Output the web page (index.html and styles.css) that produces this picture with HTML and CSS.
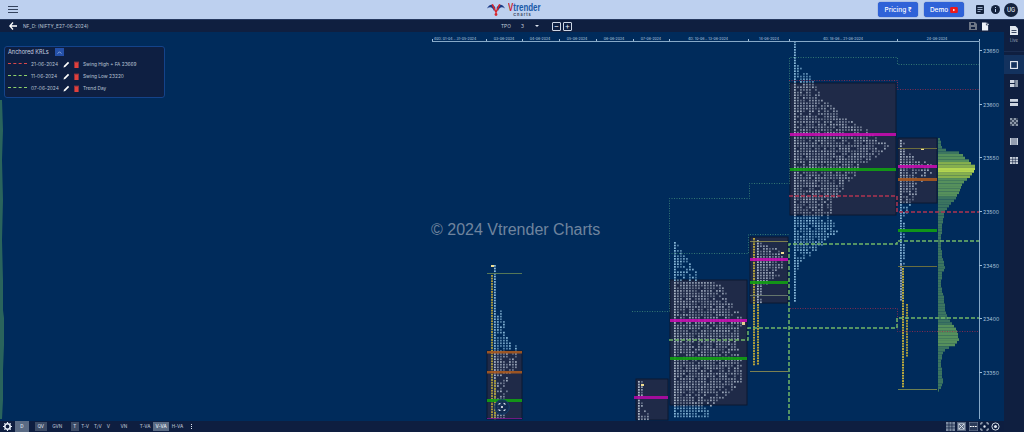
FILE: index.html
```html
<!DOCTYPE html>
<html lang="en">
<head>
<meta charset="utf-8">
<title>Vtrender Charts</title>
<link rel="stylesheet" href="styles.css">
</head>
<body>
<header class="topbar">
  <button class="menu" aria-label="Menu"><span></span><span></span><span></span></button>
  <div class="logo">
    <svg class="logo-mark" viewBox="0 0 18 13" width="18" height="13">
      <path d="M0 5.500 C2 1 6 0 8.500 5 L7 8 C5.500 4 3 3.500 0 5.500Z" fill="#1b3a86"/>
      <path d="M18 5.500 C16 1 12 0 9.500 5 L11 8 C12.500 4 15 3.500 18 5.500Z" fill="#1b3a86"/>
      <path d="M6 1 L9 7.500 L12 1 L13.500 1.500 L9 11 L4.500 1.500Z" fill="#d8262c"/>
      <circle cx="9" cy="11.500" r="1.400" fill="#d8262c"/>
    </svg>
    <div class="logo-text"><span class="logo-name"><b>V</b>trender</span><span class="logo-sub">Charts</span></div>
  </div>
  <div class="top-actions">
    <button class="cta">Pricing ₹</button>
    <button class="cta">Demo
      <svg viewBox="0 0 9 7" width="8" height="6"><rect width="9" height="7" rx="1.500" fill="#f01818"/><path d="M3.500 2 L6 3.500 L3.500 5Z" fill="#fff"/></svg>
    </button>
    <svg class="top-icon" viewBox="0 0 8 9" width="8" height="9"><rect width="8" height="9" rx="1" fill="#14233f"/><path d="M1.500 2.500h5M1.500 4.500h5M1.500 6.500h3" stroke="#bdd0ef" stroke-width=".8"/></svg>
    <svg class="top-icon" viewBox="0 0 9 9" width="9" height="9"><circle cx="4.500" cy="4.500" r="4.500" fill="#14233f"/><path d="M4.500 4v3M4.500 2v1" stroke="#bdd0ef"/></svg>
    <div class="avatar">UG</div>
  </div>
</header>
<div class="workspace">
  <div class="main">
    <div class="toolbar">
      <div class="tb-left">
        <svg viewBox="0 0 8 8" width="8" height="8"><path d="M4 .5 L.8 4 L4 7.500 M1 4 H8" fill="none" stroke="#fff" stroke-width="1.300"/></svg>
        <span class="symbol">NF_D: (NIFTY_E27-06-2024)</span>
      </div>
      <div class="tb-center">
        <span class="tb-label">TPO</span>
        <span class="tb-value">3</span>
        <span class="tb-caret"></span>
        <span class="step">−</span>
        <span class="step">+</span>
      </div>
      <div class="tb-right">
        <svg viewBox="0 0 8 8" width="8" height="8"><path d="M0 0H6L8 2V8H0Z" fill="#6d7686"/><rect x="2" y="1" width="3" height="2" fill="#0f1f40"/><rect x="2" y="5" width="4" height="2" fill="#0f1f40"/></svg>
        <svg viewBox="0 0 8 9" width="7" height="9"><path d="M0 0H4.500V3H7V9H0Z" fill="#eef2f8"/><path d="M5.500 0V2H8" fill="none" stroke="#eef2f8"/></svg>
      </div>
    </div>
    <section class="chart">
      <svg id="plot" class="plot" viewBox="0 32 1004 389" width="1004" height="389"></svg>
      <div class="watermark">© 2024 Vtrender Charts</div>
      <div class="krl">
        <div class="krl-head"><span>Anchored KRLs</span><button class="krl-toggle" aria-label="Collapse"><svg viewBox="0 0 6 4" width="5" height="3"><path d="M.5 3.500 L3 1 L5.500 3.500" fill="none" stroke="#cfe0ff" stroke-width=".8"/></svg></button></div>
        <div class="krl-row">
          <span class="dash dash-red"></span><span class="krl-date">21-06-2024</span>
          <svg class="pen" viewBox="0 0 7 7" width="7" height="7"><path d="M.5 6.500 L1 4.800 L5 .8 L6.200 2 L2.200 6Z" fill="#fff"/></svg>
          <svg class="bin" viewBox="0 0 5 7" width="5" height="7"><path d="M0 .8H5V1.500H0ZM.4 1.800H4.600V7H.4Z" fill="#e0403c"/></svg>
          <span class="krl-note">Swing High + FA 23669</span>
        </div>
        <div class="krl-row">
          <span class="dash dash-green"></span><span class="krl-date">11-06-2024</span>
          <svg class="pen" viewBox="0 0 7 7" width="7" height="7"><path d="M.5 6.500 L1 4.800 L5 .8 L6.200 2 L2.200 6Z" fill="#fff"/></svg>
          <svg class="bin" viewBox="0 0 5 7" width="5" height="7"><path d="M0 .8H5V1.500H0ZM.4 1.800H4.600V7H.4Z" fill="#e0403c"/></svg>
          <span class="krl-note">Swing Low 23220</span>
        </div>
        <div class="krl-row">
          <span class="dash dash-green"></span><span class="krl-date">07-06-2024</span>
          <svg class="pen" viewBox="0 0 7 7" width="7" height="7"><path d="M.5 6.500 L1 4.800 L5 .8 L6.200 2 L2.200 6Z" fill="#fff"/></svg>
          <svg class="bin" viewBox="0 0 5 7" width="5" height="7"><path d="M0 .8H5V1.500H0ZM.4 1.800H4.600V7H.4Z" fill="#e0403c"/></svg>
          <span class="krl-note">Trend Day</span>
        </div>
      </div>
      <svg class="scroll-badge" viewBox="0 0 16 16" width="16" height="16">
        <circle cx="8" cy="8" r="7.300" fill="#0f2a52" fill-opacity=".85" stroke="#14406f"/>
        <path d="M5 6V4.500H6.500M9.500 4.500H11V6M11 10V11.500H9.500M6.500 11.500H5V10" fill="none" stroke="#dfe8f2" stroke-width=".9"/>
        <circle cx="8" cy="8" r="1" fill="#fff"/>
      </svg>
    </section>
    <footer class="bottombar">
      <div class="bb-group">
        <svg class="gear" viewBox="0 0 10 10" width="9" height="9"><circle cx="5" cy="5" r="3" fill="none" stroke="#e6eef8" stroke-width="1.800"/><path d="M5 0v2M5 8v2M0 5h2M8 5h2M1.500 1.500l1.400 1.400M7.100 7.100l1.400 1.400M1.500 8.500l1.400-1.400M7.100 2.900l1.400-1.400" stroke="#e6eef8" stroke-width="1.300"/></svg>
        <span class="chip chip-d">D</span>
      </div>
      <div class="bb-group"><span class="chip chip-on">QV</span><span class="chip">GVN</span></div>
      <div class="bb-group bb-tight"><span class="chip chip-on">T</span><span class="chip">T-V</span><span class="chip">T/V</span><span class="chip">V</span></div>
      <span class="chip chip-vn">VN</span>
      <div class="bb-group bb-tight"><span class="chip">T-VA</span><span class="chip chip-sel">V-VA</span><span class="chip">H-VA</span></div>
      <span class="kebab"><i></i><i></i><i></i></span>
      <div class="bb-tools">
        <svg class="tool" viewBox="0 0 10 10" width="9" height="9"><rect width="10" height="10" fill="#7b8aa0"/><path d="M0 3.300h10M0 6.600h10M3.300 0v10M6.600 0v10" stroke="#0e1e40" stroke-width=".8"/></svg>
        <svg class="tool" viewBox="0 0 10 10" width="9" height="9"><rect width="10" height="10" fill="#56667f"/><path d="M2 2 L8 8 M8 2 L2 8" stroke="#dfe6ef"/><rect x="2" y="2" width="6" height="6" fill="none" stroke="#dfe6ef" stroke-width=".7"/></svg>
        <svg class="tool" viewBox="0 0 10 10" width="9" height="9"><rect width="10" height="10" fill="#2a3a58" stroke="#7b8aa0"/><path d="M1 5h8" stroke="#fff" stroke-width="1.200" stroke-dasharray="2 .8"/></svg>
        <svg class="tool" viewBox="0 0 10 10" width="9" height="9"><path d="M1 3V1H3M7 1H9V3M9 7V9H7M3 9H1V7" fill="none" stroke="#dfe6ef"/><circle cx="5" cy="5" r="1.300" fill="#dfe6ef"/></svg>
        <svg class="tool" viewBox="0 0 10 10" width="9" height="9"><circle cx="5" cy="5" r="4" fill="none" stroke="#dfe6ef"/><circle cx="5" cy="5" r="1.700" fill="#dfe6ef"/></svg>
      </div>
    </footer>
  </div>
  <aside class="sidebar">
    <div class="side-live">
      <svg viewBox="0 0 8 9" width="8" height="9"><path d="M0 0H5.500L8 2.500V9H0Z" fill="#dfe6ef"/><path d="M1.500 4.500h5M1.500 6.500h5" stroke="#0f1f40" stroke-width=".8"/></svg>
      <span>Live</span>
    </div>
    <div class="side-item side-sel"><svg viewBox="0 0 8 8" width="8" height="8"><rect x=".6" y=".6" width="6.800" height="6.800" fill="none" stroke="#e8eef6" stroke-width="1.100"/></svg></div>
    <div class="side-item"><svg viewBox="0 0 8 7" width="8" height="7"><rect width="4.500" height="3" fill="#cdd5e0"/><rect y="4" width="4.500" height="3" fill="#cdd5e0"/><rect x="5.200" width="2.800" height="7" fill="#8b97a8"/></svg></div>
    <div class="side-item"><svg viewBox="0 0 8 7" width="8" height="7"><rect width="8" height="2.800" fill="#cdd5e0"/><rect y="4" width="8" height="3" fill="#cdd5e0"/></svg></div>
    <div class="side-item"><svg viewBox="0 0 8 8" width="8" height="8"><rect width="8" height="8" fill="#8b97a8"/><path d="M0 2h2v2H0zM4 2h2v2H4zM2 0h2v2H2zM6 0h2v2H6zM2 4h2v2H2zM6 4h2v2H6zM0 6h2v2H0zM4 6h2v2H4z" fill="#3d4a60"/></svg></div>
    <div class="side-item"><svg viewBox="0 0 8 7" width="8" height="7"><rect width="8" height="7" fill="#cdd5e0"/><path d="M2 0v7M4 0v7M6 0v7" stroke="#0f1f40" stroke-width=".6"/></svg></div>
    <div class="side-item"><svg viewBox="0 0 8 7" width="8" height="7"><rect width="8" height="7" fill="#cdd5e0"/><path d="M2.700 0v7M5.300 0v7M0 2.300h8M0 4.700h8" stroke="#0f1f40" stroke-width=".6"/></svg></div>
  </aside>
</div>
<script src="chart.js"></script>
</body>
</html>
```
FILE: styles.css
```css
* { box-sizing: border-box; }
html, body { margin: 0; height: 100%; overflow: hidden; }
body {
  display: flex; flex-direction: column;
  width: 1024px; height: 432px;
  font-family: Inter, "Liberation Sans", sans-serif;
  background: #0f1f40;
}
button { border: 0; padding: 0; font: inherit; }

.topbar {
  height: 20px; flex: none;
  display: flex; align-items: center; justify-content: space-between;
  padding: 0 6px 0 8px;
  background: #bdd0ef;
  border-bottom: 1px solid #26395f;
  position: relative;
}
.menu { width: 10px; display: flex; flex-direction: column; gap: 1.500px; background: none; }
.menu span { height: 1.300px; background: #34435e; }
.logo { position: absolute; left: 487px; top: 2px; display: flex; gap: 3px; align-items: flex-start; }
.logo-mark { margin-top: 1px; }
.logo-text { display: flex; flex-direction: column; align-items: center; line-height: 1; width: 29px; }
.logo-name { font: 700 11px/11px "Liberation Sans", sans-serif; color: #1a5aa8; transform: scaleX(.72); transform-origin: left; width: 29px; white-space: nowrap; }
.logo-name b { color: #c8262c; }
.logo-sub { font: 700 3.800px/5px Inter, sans-serif; letter-spacing: 1px; color: #3a4660; margin-top: -1px; }
.top-actions { display: flex; align-items: center; }
.cta {
  display: flex; align-items: center; justify-content: center; gap: 2px;
  width: 40px; height: 15px; margin-right: 6px;
  background: #2f62d8; color: #fff; border-radius: 3px;
  box-shadow: 0 0 1px #1a3a90;
  font-size: 6.500px; font-weight: 500;
}
.cta + .cta { margin-right: 8px; }
.top-icon { margin-left: 4px; margin-right: 4px; }
.top-icon + .top-icon { margin-left: 3px; margin-right: 4px; }
.avatar {
  width: 14px; height: 14px; border-radius: 50%;
  background: #14233f; color: #e6ecf6;
  font-size: 5.500px; font-weight: 500;
  display: flex; align-items: center; justify-content: center;
}

.workspace { flex: 1; display: flex; min-height: 0; }
.main { width: 1004px; display: flex; flex-direction: column; }
.toolbar {
  height: 12px; flex: none; position: relative;
  display: flex; align-items: center; justify-content: space-between;
  padding: 0 15px 0 9px;
  background: #0f1f40;
  color: #c7d0de;
  font-size: 4.800px;
}
.tb-left { display: flex; align-items: center; gap: 6px; }
.symbol { color: #b9c4d6; font-size: 4.800px; }
.tb-center {
  position: absolute; left: 501px; top: 0; height: 12px;
  display: flex; align-items: center;
}
.tb-label { width: 20px; }
.tb-value { width: 14px; }
.tb-caret { width: 0; height: 0; border: 2px solid transparent; border-top: 2px solid #dfe6ef; border-bottom: 0; margin-right: 13px; }
.step {
  width: 9px; height: 9px; margin-right: 2px;
  border: 1px solid #cfd8e6; border-radius: 1px;
  color: #e6ecf6; font-size: 8px; line-height: 6px; text-align: center;
}
.tb-right { display: flex; align-items: center; gap: 5px; }

.chart { flex: 1; position: relative; background: #002b5b; overflow: hidden; }
.plot { display: block; }
.plot text { font-family: Inter, sans-serif; }
.watermark {
  position: absolute; left: 431px; top: 189px;
  font: 16px/18px "Liberation Sans", sans-serif;
  color: #6f849e;
  white-space: nowrap;
}
.krl {
  position: absolute; left: 4px; top: 14px; width: 161px; height: 52px;
  background: #0e1f42; border: 1px solid #14438a; border-radius: 3px;
  padding: 1px 3px; color: #b7c2d4; font-size: 4.800px;
}
.krl-head { display: flex; align-items: center; gap: 6px; height: 8px; color: #c9d2e0; font-size: 5.600px; margin-bottom: 2px; }
.krl-toggle { width: 9px; height: 8px; background: #2450a8; display: flex; align-items: center; justify-content: center; }
.krl-row { display: flex; align-items: center; height: 12px; }
.dash { width: 19px; height: 0; border-top: 1px dashed; margin-top: -2px; margin-right: 4px; flex: none; }
.dash-red { border-color: #d8484a; }
.dash-green { border-color: #8fd06a; }
.krl-date { width: 32px; flex: none; }
.pen { margin-right: 4px; flex: none; }
.bin { margin-right: 4px; flex: none; }

.scroll-badge { position: absolute; left: 494px; top: 367px; }

.bottombar {
  height: 11px; flex: none;
  display: flex; align-items: center;
  background: #0e1e40; color: #aeb9c9;
  font-size: 4.600px; font-weight: 500;
  padding-left: 3px;
}
.bb-group { display: flex; align-items: center; gap: 3px; margin-right: 6px; }
.bb-tight { gap: 0; margin-right: 5px; }
.chip { height: 9px; line-height: 9px; padding: 0 2.500px; text-align: center; color: #aeb9c9; }
.chip-d { width: 14px; height: 11px; line-height: 11px; background: #5a6b84; color: #dfe6ef; }
.chip-on { background: #3d4c66; color: #cfd8e4; }
.chip-sel { background: #5a6b84; color: #e6ecf4; }
.chip-vn { margin-right: 7px; padding: 0 3px; }
.kebab { display: flex; flex-direction: column; gap: 1px; }
.kebab i { width: 1.300px; height: 1.300px; background: #e0e6ef; display: block; }
.bb-tools { margin-left: auto; margin-right: 4px; display: flex; align-items: center; gap: 2.200px; }

.sidebar { width: 20px; flex: none; display: flex; flex-direction: column; align-items: stretch; background: #0f1f40; }
.side-live {
  height: 32px; flex: none;
  display: flex; flex-direction: column; align-items: center; gap: 3px;
  padding-top: 6px;
  color: #98a5b8; font-size: 4.200px;
  border-bottom: 1px solid #1a2c50;
}
.side-item { height: 19.200px; flex: none; display: flex; align-items: center; justify-content: center; }
.side-live + .side-item { margin-top: 3px; }
.side-sel { background: #13325e; }
```
FILE: chart.js
```js
// Builds the TPO market-profile chart as SVG from level data.
(function () {
  var svg = document.getElementById('plot');
  var NS = 'http://www.w3.org/2000/svg';
  var seed = 7;
  function rnd() { seed = (seed * 16807) % 2147483647; return seed / 2147483647; }
  function add(tag, attrs, text) {
    var el = document.createElementNS(NS, tag);
    for (var k in attrs) el.setAttribute(k, attrs[k]);
    if (text) el.textContent = text;
    svg.appendChild(el);
    return el;
  }
  function rect(x, y, w, h, fill, op) {
    var a = { x: x, y: y, width: w, height: h, fill: fill };
    if (op) a.opacity = op;
    add('rect', a);
  }
  function line(pts, color, width, dash, op) {
    add('polyline', {
      points: pts, fill: 'none', stroke: color, 'stroke-width': width,
      'stroke-dasharray': dash || 'none', opacity: op || 1
    });
  }
  function interp(k, y) {
    for (var i = 0; i < k.length - 1; i++) {
      if (y >= k[i][0] && y <= k[i + 1][0]) {
        var t = (y - k[i][0]) / (k[i + 1][0] - k[i][0] || 1);
        return k[i][1] + t * (k[i + 1][1] - k[i][1]);
      }
    }
    return k[0][1];
  }
  function profile(p) {
    var k = p.knots, top = k[0][0], bot = k[k.length - 1][0];
    for (var y = top; y <= bot; y += 2.67) {
      var right = interp(k, y);
      var n = 0;
      for (var x = p.left; x <= right; x += 3) {
        var inBox = p.box && x >= p.box[0] && x < p.box[2] && y >= p.box[1] && y < p.box[3];
        var edge = right - x < 12;
        if (n > 0 && rnd() < (edge ? 0.3 : 0.12)) { n++; continue; }
        var c = inBox ? '#b4c0d0' : '#8fc0e0';
        var o = n === 0 ? 0.95 : (inBox ? 0.4 : 0.5) + rnd() * 0.45;
        rect(x, y, 1.8, 1.7, c, o.toFixed(2));
        n++;
      }
    }
  }
  function column(x, y0, y1, color) {
    for (var y = y0; y <= y1; y += 2.67) rect(x, y, 2, 1.8, color);
  }

  var boxes = [
    [487, 351, 522, 419], [636, 379, 668, 420], [670, 280, 747, 405],
    [750, 237, 788, 303], [790, 83, 896, 215], [898, 138, 937, 203]
  ];

  // Left composite edge
  var lz = [[100,2],[130,3],[160,2],[200,3],[240,2],[280,3],[310,3],[318,4],[345,4],[370,3],[400,3],[419,2]];
  var lp = '0,' + lz[0][0];
  lz.forEach(function (a) { lp += ' ' + a[1] + ',' + a[0]; });
  lp += ' 0,419';
  add('polygon', { points: lp, fill: '#2a645c' });

  // Dark value boxes
  boxes.forEach(function (b) {
    add('rect', {
      x: b[0], y: b[1], width: b[2] - b[0], height: b[3] - b[1],
      fill: '#1f2a48', stroke: '#0c1830', 'stroke-width': 1
    });
  });

  // Composite volume profile, one stepped bar per price row
  var vp = [[138,2],[142,3],[148,5],[152,24],[156,26],[158,30],[162,33],[165,38],[171,36],[175,32],[178,29],[183,24],[190,22],[198,17],[203,12],[210,7],[218,5],[225,4],[240,3],[255,4],[266,7],[272,4],[285,3],[297,6],[310,7],[318,10],[324,16],[330,19],[338,21],[344,17],[347,9],[352,5],[360,3],[372,4],[380,5],[386,3],[389,1]];
  for (var vy = 138; vy < 389; vy += 2.67) {
    var vw = Math.round(interp(vp, vy));
    var vc = '#3c7560';
    if (vy >= 165 && vy < 171) vc = '#b3d650';
    else if (vy >= 160 && vy < 176) vc = '#86b04e';
    else if ((vy >= 152 && vy < 196) || (vy >= 324 && vy < 345)) vc = '#56905c';
    rect(938, vy, vw, 2.67, vc);
  }

  // Profile dots
  profile({ left: 494, box: boxes[0], knots: [[265,496],[308,497],[310,500],[320,503],[335,505],[343,510],[345,515],[370,515],[376,510],[395,505],[418,505]] });
  profile({ left: 638, box: boxes[1], knots: [[381,643],[410,644],[413,648],[419,648]] });
  profile({ left: 674, box: boxes[2], knots: [[242,675],[250,681],[260,688],[270,695],[280,698],[282,719],[300,730],[310,736],[318,742],[330,742],[345,735],[358,742],[380,742],[395,726],[405,712],[418,708]] });
  profile({ left: 757, box: boxes[3], knots: [[240,760],[246,772],[252,782],[262,784],[275,778],[285,765],[295,760],[305,760]] });
  profile({ left: 794, box: boxes[4], knots: [[41,795],[60,796],[68,802],[80,813],[90,818],[100,824],[108,835],[115,840],[125,860],[130,868],[140,880],[145,890],[155,878],[165,860],[175,855],[185,845],[190,840],[205,832],[215,830],[220,832],[230,837],[240,825],[250,815],[262,800],[270,797],[302,796]] });
  profile({ left: 900, box: boxes[5], knots: [[140,903],[150,903],[155,912],[160,925],[165,932],[172,932],[176,925],[185,918],[195,915],[205,910],[215,905],[225,904],[264,904]] });

  // Yellow opening columns
  column(491, 275, 418, '#a8963a');
  column(494, 380, 418, '#a89a36');
  column(753, 238, 365, '#b8a43a');
  column(757, 304, 365, '#b8a43a');
  column(902, 268, 388, '#c0ae3c');
  column(906, 304, 356, '#a89a3a');
  column(900, 264, 300, '#8fa0b8');
  rect(491, 265, 3, 2, '#f0dc90');
  rect(641, 384, 3, 2, '#f0dc90');
  rect(742, 322, 3, 3, '#e8d090');
  rect(781, 252, 3, 2, '#f0dc90');
  rect(921, 148, 3, 2, '#f0dc90');

  // Level bands
  [
    [487, 273, 35, 1, '#5e7f56'], [487, 351, 35, 2.5, '#a8591f'], [487, 371, 35, 2.5, '#a8591f'],
    [487, 399, 35, 3, '#12a012'], [487, 418, 35, 1, '#7a1a8a'],
    [634, 396, 34, 3, '#b00aa4'],
    [670, 319, 77, 3, '#c40cae'], [670, 357, 77, 3, '#12a012'],
    [750, 241, 38, 1, '#8a8a50'], [750, 258, 38, 3, '#c40cae'], [750, 281, 38, 3, '#12a012'],
    [750, 295, 38, 1, '#6d7d70'], [750, 371, 38, 1, '#8a8a50'],
    [790, 133, 106, 3, '#c40cae'], [790, 168, 106, 3, '#12a012'],
    [898, 148, 39, 1, '#76763c'], [898, 165, 39, 3, '#c40cae'], [898, 178, 39, 3, '#a8591f'],
    [898, 229, 39, 3, '#12a012'], [898, 266, 39, 1, '#76763c'], [898, 389, 39, 1, '#7a8a50']
  ].forEach(function (b) { rect(b[0], b[1], b[2], b[3], b[4], 0.9); });

  // Thin dotted KRL steps
  var dotG = '#3f8a78', dotR = '#a02c4c';
  line('632,311.5 669.5,311.5 669.5,198.5 749.5,198.5 749.5,183.5 789.5,183.5 789.5,57.5 897.5,57.5 897.5,64.5 979,64.5', dotG, 1, '1 1.500', 0.8);
  line('669,253.5 748.5,253.5 748.5,234.5 789,234.5', dotG, 1, '1 1.500', 0.8);
  line('789,80.5 897.5,80.5 897.5,89.5 979,89.5', dotR, 1, '1 1.500', 0.8);
  line('790,308.5 897.5,308.5 897.5,331.5 979,331.5', dotR, 1, '1 1.500', 0.8);

  // Heavy dashed KRLs
  line('789,196 897,196 897,212 979,212', '#b03450', 1.5, '4 2');
  line('669,340 748,340 748,328 897,328 897,318 979,318', '#72b868', 1.5, '4 2');
  line('789,420 789,244 897,244 897,241 979,241', '#72b868', 1.5, '4 2');

  // Axes
  line('432,41.5 979.5,41.5 979.5,419', '#86a9c8', 1);
  var ticks = [432, 486, 522, 559, 596, 633, 669, 748, 789, 897, 979];
  ticks.forEach(function (x) { line((x + 0.5) + ',39 ' + (x + 0.5) + ',41', '#9fbcd6', 1); });
  var labels = [
    [455, '40D: 01-04 .. 31-05-2024'], [504, '03-06-2024'], [540, '04-06-2024'], [577, '05-06-2024'],
    [614, '06-06-2024'], [651, '07-06-2024'], [708, '4D: 10-06 .. 13-06-2024'], [769, '14-06-2024'],
    [843, '4D: 18-06 .. 21-06-2024'], [937, '24-06-2024']
  ];
  labels.forEach(function (l) {
    add('text', { x: l[0], y: 40, 'text-anchor': 'middle', fill: '#b8cde0', 'font-size': 3.5 }, l[1]);
  });
  [[23650, 50], [23600, 104], [23550, 157], [23500, 211], [23450, 265], [23400, 318], [23350, 372]].forEach(function (t) {
    line('979,' + (t[1] + 0.5) + ' 982,' + (t[1] + 0.5), '#9fbcd6', 1);
    add('text', { x: 983, y: t[1] + 2.5, fill: '#a9c2da', 'font-size': 5.2 }, String(t[0]));
  });
})();
```
